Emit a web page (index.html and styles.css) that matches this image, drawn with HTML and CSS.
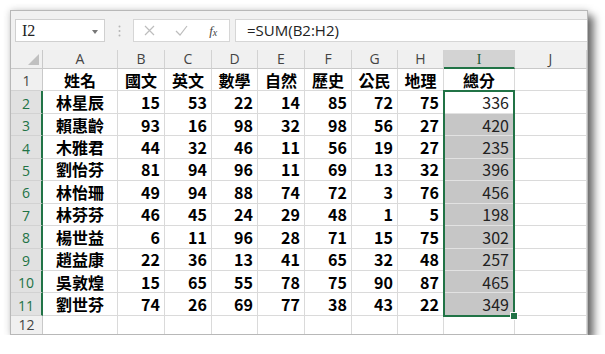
FILE: index.html
```html
<!DOCTYPE html>
<html lang="zh-Hant">
<head>
    <meta charset="UTF-8">
    <meta name="viewport" content="width=device-width, initial-scale=1.0">
    <title>成績表</title>
    <link rel="stylesheet" href="styles.css">
</head>
<body>
    <div class="window">
        <!-- 公式列 -->
        <div class="formula-bar">
            <div class="name-box">
                <span class="ref"><span class="serif">I</span>2</span>
                <span class="caret"></span>
            </div>
            <div class="grip">
                <svg width="3" height="12" viewBox="0 0 3 12">
                    <circle cx="1.5" cy="1.5" r="1" fill="#b5b5b5"/>
                    <circle cx="1.5" cy="6" r="1" fill="#b5b5b5"/>
                    <circle cx="1.5" cy="10.5" r="1" fill="#b5b5b5"/>
                </svg>
            </div>
            <div class="fx-buttons">
                <span class="btn">
                    <svg width="11" height="11" viewBox="0 0 11 11">
                        <path d="M1 1 L10 10 M10 1 L1 10" stroke="#bdbdbd" stroke-width="1.2" fill="none"/>
                    </svg>
                </span>
                <span class="btn">
                    <svg width="13" height="11" viewBox="0 0 13 11">
                        <path d="M1 6 L5 10 L12 1" stroke="#bdbdbd" stroke-width="1.2" fill="none"/>
                    </svg>
                </span>
                <span class="btn fx"><i>f</i><i class="x">x</i></span>
            </div>
            <div class="formula">=SUM(B2:H2)</div>
        </div>

        <!-- 工作表 -->
        <div class="sheet">
            <div class="corner"><span class="tri"></span></div>
            <div class="ch">A</div>
            <div class="ch">B</div>
            <div class="ch">C</div>
            <div class="ch">D</div>
            <div class="ch">E</div>
            <div class="ch">F</div>
            <div class="ch">G</div>
            <div class="ch">H</div>
            <div class="ch active"><span class="serif">I</span></div>
            <div class="ch">J</div>

            <div class="rh">1</div>
            <div class="c head">姓名</div>
            <div class="c head">國文</div>
            <div class="c head">英文</div>
            <div class="c head">數學</div>
            <div class="c head">自然</div>
            <div class="c head">歷史</div>
            <div class="c head">公民</div>
            <div class="c head">地理</div>
            <div class="c head">總分</div>
            <div class="c"></div>

            <div class="rh sel">2</div>
            <div class="c name">林星辰</div>
            <div class="c num">15</div><div class="c num">53</div><div class="c num">22</div><div class="c num">14</div>
            <div class="c num">85</div><div class="c num">72</div><div class="c num">75</div>
            <div class="c tot first">336</div>
            <div class="c"></div>

            <div class="rh sel">3</div>
            <div class="c name">賴惠齡</div>
            <div class="c num">93</div><div class="c num">16</div><div class="c num">98</div><div class="c num">32</div>
            <div class="c num">98</div><div class="c num">56</div><div class="c num">27</div>
            <div class="c tot">420</div>
            <div class="c"></div>

            <div class="rh sel">4</div>
            <div class="c name">木雅君</div>
            <div class="c num">44</div><div class="c num">32</div><div class="c num">46</div><div class="c num">11</div>
            <div class="c num">56</div><div class="c num">19</div><div class="c num">27</div>
            <div class="c tot">235</div>
            <div class="c"></div>

            <div class="rh sel">5</div>
            <div class="c name">劉怡芬</div>
            <div class="c num">81</div><div class="c num">94</div><div class="c num">96</div><div class="c num">11</div>
            <div class="c num">69</div><div class="c num">13</div><div class="c num">32</div>
            <div class="c tot">396</div>
            <div class="c"></div>

            <div class="rh sel">6</div>
            <div class="c name">林怡珊</div>
            <div class="c num">49</div><div class="c num">94</div><div class="c num">88</div><div class="c num">74</div>
            <div class="c num">72</div><div class="c num">3</div><div class="c num">76</div>
            <div class="c tot">456</div>
            <div class="c"></div>

            <div class="rh sel">7</div>
            <div class="c name">林芬芬</div>
            <div class="c num">46</div><div class="c num">45</div><div class="c num">24</div><div class="c num">29</div>
            <div class="c num">48</div><div class="c num">1</div><div class="c num">5</div>
            <div class="c tot">198</div>
            <div class="c"></div>

            <div class="rh sel">8</div>
            <div class="c name">楊世益</div>
            <div class="c num">6</div><div class="c num">11</div><div class="c num">96</div><div class="c num">28</div>
            <div class="c num">71</div><div class="c num">15</div><div class="c num">75</div>
            <div class="c tot">302</div>
            <div class="c"></div>

            <div class="rh sel">9</div>
            <div class="c name">趙益康</div>
            <div class="c num">22</div><div class="c num">36</div><div class="c num">13</div><div class="c num">41</div>
            <div class="c num">65</div><div class="c num">32</div><div class="c num">48</div>
            <div class="c tot">257</div>
            <div class="c"></div>

            <div class="rh sel">10</div>
            <div class="c name">吳敦煌</div>
            <div class="c num">15</div><div class="c num">65</div><div class="c num">55</div><div class="c num">78</div>
            <div class="c num">75</div><div class="c num">90</div><div class="c num">87</div>
            <div class="c tot">465</div>
            <div class="c"></div>

            <div class="rh sel">11</div>
            <div class="c name">劉世芬</div>
            <div class="c num">74</div><div class="c num">26</div><div class="c num">69</div><div class="c num">77</div>
            <div class="c num">38</div><div class="c num">43</div><div class="c num">22</div>
            <div class="c tot">349</div>
            <div class="c"></div>

            <div class="rh last">12</div>
            <div class="c"></div><div class="c"></div><div class="c"></div><div class="c"></div><div class="c"></div>
            <div class="c"></div><div class="c"></div><div class="c"></div><div class="c"></div><div class="c"></div>

            <!-- 選取範圍 I2:I11 -->
            <div class="selection"><span class="fill-handle"></span></div>
        </div>
    </div>
</body>
</html>
```

FILE: styles.css
```css
/* 基本 */
body {
    margin: 0;
    background-color: #fff;
    font-family: 'Noto Sans CJK TC', 'Noto Sans', sans-serif;
}
.serif {
    font-family: 'Liberation Serif', serif;
}

/* 視窗外框 */
.window {
    margin: 10px 0 0 10px;
    width: 578px;
    height: 325px;
    box-sizing: border-box;
    border: 1px solid #b8b8b8;
    background-color: #fff;
    overflow: hidden;
    box-shadow: 6px 6px 8px rgba(0, 0, 0, 0.55), 0 0 7px rgba(0, 0, 0, 0.18);
}

/* 公式列 */
.formula-bar {
    display: flex;
    align-items: center;
    height: 39px;
    padding: 0 0 0 4px;
    background-color: #f1f1f1;
}
.name-box {
    display: flex;
    align-items: center;
    justify-content: space-between;
    width: 90px;
    height: 23px;
    box-sizing: border-box;
    padding: 0 6px 0 6px;
    background-color: #fff;
    border: 1px solid #d0d0d0;
    font-size: 15px;
    color: #222;
}
.name-box .ref {
    font-family: 'Liberation Serif', serif;
    font-size: 16px;
}
.caret {
    width: 0;
    height: 0;
    border-left: 3.5px solid transparent;
    border-right: 3.5px solid transparent;
    border-top: 4px solid #777;
    margin-top: 2px;
}
.grip {
    width: 28px;
    display: flex;
    justify-content: center;
    padding-top: 1px;
}
.fx-buttons {
    display: flex;
    align-items: center;
    width: 97px;
    height: 23px;
    box-sizing: border-box;
    background-color: #fff;
    border: 1px solid #d6d6d6;
}
.btn {
    flex: 1;
    display: flex;
    justify-content: center;
    align-items: center;
}
.fx {
    font-family: 'Liberation Serif', serif;
    font-size: 13px;
    color: #444;
}
.fx .x {
    font-size: 10px;
    margin-top: 4px;
}
.formula {
    flex: 1;
    height: 23px;
    box-sizing: border-box;
    margin-left: 5px;
    padding-left: 11px;
    background-color: #fff;
    border: 1px solid #d6d6d6;
    border-right: none;
    font-family: 'Open Sans', sans-serif;
    font-size: 15px;
    line-height: 21px;
    color: #222;
}

/* 工作表格線 */
.sheet {
    position: relative;
    display: grid;
    grid-template-columns: 32px 75px 47px 47px 46px 47px 47px 46px 46px 71px 72px;
    grid-template-rows: 19px repeat(11, 22.45px) 19px;
}
.sheet > div {
    box-sizing: border-box;
}
.corner {
    position: relative;
    background-color: #f0f0f0;
    border-right: 1px solid #c9c9c9;
    border-bottom: 1px solid #c9c9c9;
}
.corner .tri {
    position: absolute;
    right: 3px;
    bottom: 3px;
    width: 0;
    height: 0;
    border-left: 11px solid transparent;
    border-bottom: 11px solid #c0c0c0;
}
.ch {
    background-color: #f0f0f0;
    border-right: 1px solid #d2d2d2;
    border-bottom: 1px solid #c9c9c9;
    text-align: center;
    font-family: 'Open Sans', sans-serif;
    font-size: 14px;
    line-height: 18px;
    color: #444;
}
.ch.active {
    background-color: #d3d3d3;
    border-bottom: 2px solid #217346;
    color: #1d5a38;
}
.rh {
    background-color: #f0f0f0;
    border-right: 1px solid #c9c9c9;
    border-bottom: 1px solid #d2d2d2;
    font-family: 'Open Sans', sans-serif;
    font-size: 14px;
    color: #444;
    display: flex;
    align-items: center;
    justify-content: center;
    padding-top: 2px;
}
.rh.sel {
    background-color: #e1e1e1;
    border-right: 2px solid #217346;
    color: #217346;
}
.rh.last {
    padding-top: 0;
}
.c {
    border-right: 1px solid #dadada;
    border-bottom: 1px solid #dadada;
    font-size: 16px;
    font-weight: 700;
    color: #000;
    display: flex;
    align-items: center;
    padding: 0 4px;
}
.c.head,
.c.name {
    justify-content: center;
}
.c.num {
    justify-content: flex-end;
}
.c.tot {
    justify-content: flex-end;
    font-weight: 400;
    color: #222;
    background-color: #c6c6c6;
    border-bottom-color: #e2e2e2;
    padding-right: 5px;
}
.c.tot.first {
    background-color: #fff;
}

/* 選取框 */
.selection {
    position: absolute;
    grid-column: 10 / 11;
    grid-row: 3 / 13;
    top: -1px;
    bottom: -1px;
    left: -1px;
    right: 0;
    border: 2px solid #217346;
    pointer-events: none;
}
.fill-handle {
    position: absolute;
    right: -5px;
    bottom: -5px;
    width: 6px;
    height: 6px;
    background-color: #217346;
    border: 1px solid #fff;
}
```
